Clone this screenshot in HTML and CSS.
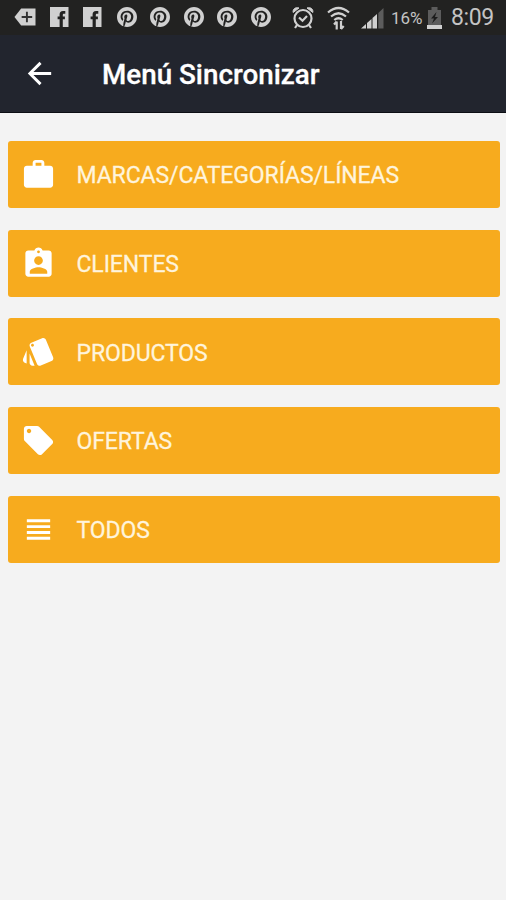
FILE: index.html
```
<!DOCTYPE html>
<html lang="es">

<head>
    <meta charset="UTF-8">
    <meta name="viewport" content="width=device-width, initial-scale=1.0">
    <title>Menú Sincronizar</title>
    <link rel="stylesheet" href="styles.css">
</head>

<body>
    <!-- Shared status bar icons -->
    <svg class="sprite">
        <symbol id="facebook" viewBox="0 0 20 20">
            <path fill-rule="evenodd" d="M0 0h18.500v20h-5.700v-7.800h2.100V9.500h-2.100V7.900c0-.8.400-1.200 1.200-1.200h1.300V4H13c-2.300 0-3.400 1.300-3.400 3.500v2H7.600v2.700h2V20H0z" />
        </symbol>
        <symbol id="pinterest" viewBox="0 8 496 496">
            <path d="M496 256c0 137-111 248-248 248-25.600 0-50.200-3.900-73.400-11.100 10.100-16.500 25.200-43.500 30.800-65 3-11.600 15.400-59 15.400-59 8.100 15.400 31.700 28.500 56.800 28.500 74.800 0 128.700-68.800 128.700-154.300 0-81.900-66.900-143.200-152.900-143.200-107 0-163.900 71.800-163.900 150.100 0 36.400 19.400 81.700 50.300 96.100 4.700 2.200 7.200 1.200 8.300-3.300.8-3.400 5-20.300 6.900-28.100.6-2.500.3-4.700-1.700-7.100-10.100-12.500-18.300-35.300-18.300-56.600 0-54.700 41.400-107.600 112-107.600 60.900 0 103.600 41.500 103.600 100.900 0 67.100-33.900 113.600-78 113.600-24.300 0-42.600-20.100-36.700-44.800 7-29.500 20.500-61.300 20.500-82.600 0-19-10.200-34.900-31.400-34.900-24.900 0-44.900 25.700-44.900 60.200 0 22 7.400 36.800 7.400 36.800s-24.500 103.800-29 123.200c-5 21.400-3 51.600-.9 71.200C65.400 450.900 0 361.100 0 256 0 119 111 8 248 8s248 111 248 248z" />
        </symbol>
    </svg>

    <div class="status-bar">
        <div class="notifications">
            <svg class="tag-icon" viewBox="0 0 23 20">
                <path d="M7.500 1H22.500V19H7.500L.5 10z" />
                <path class="tag-plus" d="M13.500 4.500v11M8 10h11" />
            </svg>
            <svg><use href="#facebook" /></svg>
            <svg><use href="#facebook" /></svg>
            <svg><use href="#pinterest" /></svg>
            <svg><use href="#pinterest" /></svg>
            <svg><use href="#pinterest" /></svg>
            <svg><use href="#pinterest" /></svg>
            <svg><use href="#pinterest" /></svg>
        </div>
        <div class="system">
            <svg class="alarm-icon" viewBox="0 0 23 23">
                <circle cx="11" cy="12.500" r="8.500" />
                <path d="M7 11.500l3.500 3.200 4.500-4.700M5 19l-2 3M17 19l2 3" />
                <path class="bell" d="M1.200 6.500C.5 3 3.500.8 7 2zM20.800 6.500C21.500 3 18.500.8 15 2z" />
            </svg>
            <svg class="wifi-icon" viewBox="0 0 23 24">
                <path d="M1 6.500Q11.500-2.500 22 6.500M4 10.500Q11.500 4 19 10.500M7.300 14Q11.500 10.500 15.700 14" />
                <path class="transfer" d="M9.700 23.500v-8M7 18.500l2.700-3M14 15v8M14 23l2.700-3" />
            </svg>
            <svg class="signal-icon" viewBox="0 0 23 22">
                <path d="M0 21.500L5 17v4.500zM6 16l4.500-4v9.500H6zM11.500 11L16 7v14.500h-4.500z" />
                <path class="signal-off" d="M17.300 6L22.500 1v20.500h-5.200z" />
            </svg>
            <span class="percent">16%</span>
            <svg class="battery-icon" viewBox="0 0 15 22">
                <path class="battery-body" d="M1 3h3.500V0h6v3H14v16H1z" />
                <path class="bolt" d="M9.500 5L4 11.500h3L5 16.500l6-6.500H8z" />
                <path d="M0 18h15v4H0z" />
            </svg>
            <span class="clock">8:09</span>
        </div>
    </div>

    <header>
        <a href="#" class="back-btn" aria-label="Volver">
            <svg viewBox="0 0 24 24"><path d="M20 11H7.830l5.590-5.590L12 4l-8 8 8 8 1.410-1.410L7.830 13H20v-2z" /></svg>
        </a>
        <h1>Menú Sincronizar</h1>
    </header>

    <div class="menu">
        <button class="menu-item">
            <svg viewBox="0 0 24 24"><path d="M20 6h-4V4c0-1.110-.89-2-2-2h-4c-1.110 0-2 .89-2 2v2H4c-1.110 0-1.990.89-1.990 2L2 19c0 1.110.89 2 2 2h16c1.110 0 2-.89 2-2V8c0-1.110-.89-2-2-2zm-6 0h-4V4h4v2z" /></svg>
            <span>MARCAS/CATEGORÍAS/LÍNEAS</span>
        </button>
        <button class="menu-item">
            <svg viewBox="0 0 24 24"><path d="M19 3h-4.180C14.400 1.840 13.300 1 12 1c-1.300 0-2.400.84-2.820 2H5c-1.100 0-2 .9-2 2v14c0 1.100.9 2 2 2h14c1.100 0 2-.9 2-2V5c0-1.100-.9-2-2-2zm-7 0c.55 0 1 .45 1 1s-.45 1-1 1-1-.45-1-1 .45-1 1-1zm0 4c1.660 0 3 1.340 3 3s-1.340 3-3 3-3-1.340-3-3 1.340-3 3-3zm6 12H6v-1.400c0-2 4-3.100 6-3.100s6 1.100 6 3.100V19z" /></svg>
            <span>CLIENTES</span>
        </button>
        <button class="menu-item">
            <svg viewBox="0 0 24 24"><path d="M2.530 19.650l1.340.56v-9.030l-2.430 5.860c-.41 1.020.08 2.190 1.090 2.610zm19.500-3.700L17.070 3.980c-.31-.75-1.040-1.210-1.810-1.230-.26 0-.53.04-.79.15L7.100 5.950c-.75.31-1.210 1.030-1.230 1.800-.01.27.04.54.15.8l4.960 11.970c.31.76 1.050 1.220 1.830 1.230.26 0 .52-.05.77-.15l7.360-3.050c1.020-.42 1.510-1.590 1.090-2.600zM7.880 8.750c-.55 0-1-.45-1-1s.45-1 1-1 1 .45 1 1-.45 1-1 1zm-2 11c0 1.100.9 2 2 2h1.450l-3.450-8.340v6.340z" /></svg>
            <span>PRODUCTOS</span>
        </button>
        <button class="menu-item">
            <svg viewBox="0 0 24 24"><path d="M21.410 11.580l-9-9C12.050 2.220 11.550 2 11 2H4c-1.100 0-2 .9-2 2v7c0 .55.22 1.050.59 1.420l9 9c.36.36.86.58 1.410.58.55 0 1.050-.22 1.410-.59l7-7c.37-.36.59-.86.59-1.410 0-.55-.23-1.060-.59-1.420zM5.500 7C4.670 7 4 6.330 4 5.500S4.670 4 5.500 4 7 4.670 7 5.500 6.330 7 5.500 7z" /></svg>
            <span>OFERTAS</span>
        </button>
        <button class="menu-item">
            <svg viewBox="0 0 24 24"><path d="M4 15h16v-2H4v2zm0 4h16v-2H4v2zm0-8h16V9H4v2zm0-6v2h16V5H4z" /></svg>
            <span>TODOS</span>
        </button>
    </div>
</body>

</html>
```
FILE: styles.css
```
body {
    margin: 0;
    font-family: Roboto, sans-serif;
    background-color: #f3f3f3;
}

.sprite {
    display: none;
}

.status-bar {
    display: flex;
    justify-content: space-between;
    align-items: center;
    height: 35px;
    box-sizing: border-box;
    padding: 0 13px 0 14px;
    background-color: #222221;
    color: #c4c4c4;
}

.notifications,
.system {
    display: flex;
    align-items: center;
}

.notifications {
    gap: 13.7px;
    margin-top: -1px;
}

.notifications svg {
    width: 20px;
    height: 20px;
    margin-left: -0.1px;
    fill: #d0d0d0;
}

.notifications .tag-icon {
    width: 22px;
}

.notifications .tag-plus {
    stroke: #333;
    stroke-width: 2;
}

.system svg {
    fill: #d0d0d0;
}

.system .alarm-icon,
.system .wifi-icon {
    width: 23px;
    height: 23px;
    fill: none;
    stroke: #d0d0d0;
    stroke-width: 2.2;
}

.system .alarm-icon .bell {
    fill: #d0d0d0;
    stroke-width: 1;
}

.system .wifi-icon {
    height: 24px;
    margin-left: 12px;
}

.system .signal-icon {
    width: 23px;
    height: 22px;
    margin-left: 11px;
}

.signal-off,
.battery-body {
    fill: #5c5c5c;
}

.percent {
    width: 31px;
    margin-left: 7px;
    font-size: 17px;
}

.system .battery-icon {
    width: 15px;
    height: 22px;
    margin-left: 5px;
}

.bolt {
    fill: #1c1c1c;
}

.clock {
    width: 42px;
    margin-left: 9px;
    font-size: 23px;
    letter-spacing: -0.4px;
}

header {
    display: flex;
    align-items: center;
    height: 78px;
    box-sizing: border-box;
    padding: 0 22px;
    border-bottom: 1px solid #0c0e14;
    background-color: #22252e;
    color: #fff;
}

.back-btn svg {
    display: block;
    width: 35px;
    height: 35px;
    fill: #fff;
}

h1 {
    margin: 2px 0 0 45px;
    font-size: 27.8px;
    font-weight: 500;
    -webkit-text-stroke: 0.3px #fff;
}

.menu {
    display: flex;
    flex-direction: column;
    gap: 21.7px;
    padding: 28px 6.5px 0 8px;
}

.menu-item {
    display: flex;
    align-items: center;
    height: 67px;
    padding: 0 13px;
    border: none;
    border-radius: 3px;
    background-color: #f7ab1e;
    color: #fff4dc;
    font-family: inherit;
    font-size: 23px;
    letter-spacing: -0.1px;
    text-align: left;
    cursor: pointer;
}

.menu-item svg {
    width: 35px;
    height: 35px;
    margin-right: 20.5px;
    fill: #fff;
}

.menu-item span {
    margin-top: 2.6px;
    -webkit-text-stroke: 0.3px #fff4dc;
}
```
